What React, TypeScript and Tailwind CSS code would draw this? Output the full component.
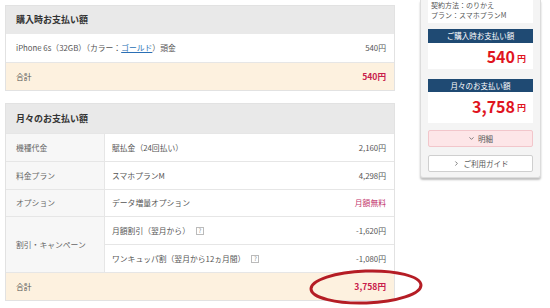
import React from "react";
import { ChevronDown, ChevronRight } from "lucide-react";

const font = { fontFamily: '"Noto Sans CJK JP", "Noto Sans", sans-serif' };

const Help = () => (
  <span className="ml-[6px] inline-flex h-[8px] w-[8px] items-center justify-center border border-[#bbb] text-[6px] leading-none text-[#888]">
    ?
  </span>
);

const Row = ({
  label,
  item,
  value,
  h = "h-[28px]",
  valueClass = "text-[#555]",
}: {
  label: string;
  item: React.ReactNode;
  value: string;
  h?: string;
  valueClass?: string;
}) => (
  <div className={`flex ${h} border-t border-[#e6e6e6]`}>
    <div className="flex w-[99px] items-center border-r border-[#e6e6e6] bg-[#f7f7f7] pl-[10px] text-[#666]">
      {label}
    </div>
    <div className="flex flex-1 items-center justify-between bg-white pl-[7px] pr-[8px]">
      <span className="flex items-center">{item}</span>
      <span className={valueClass}>{value}</span>
    </div>
  </div>
);

const SubRow = ({ item, value, first }: { item: React.ReactNode; value: string; first?: boolean }) => (
  <div
    className={`flex items-center justify-between bg-white pl-[7px] pr-[8px] ${
      first ? "h-[27px]" : "h-[28px] border-t border-[#e6e6e6]"
    }`}
  >
    <span className="flex items-center">{item}</span>
    <span>{value}</span>
  </div>
);

export default function App() {
  return (
    <div className="relative flex h-[308px] w-[550px] overflow-hidden bg-white pl-[5px] text-[7.8px] text-[#555]" style={font}>
      <div className="w-[390px]">
        {/* 購入時 */}
        <div className="mt-[5px] border border-[#e2e2e2]">
          <div className="flex h-[28px] items-center bg-[#e9e9e9] pl-[10px] text-[9px] font-bold text-[#333]">
            購入時お支払い額
          </div>
          <div className="flex h-[28px] items-center justify-between bg-white pl-[10px] pr-[8px]">
            <span>
              iPhone 6s（32GB）（カラー：<span className="text-[#2a6fb5] underline">ゴールド</span>）頭金
            </span>
            <span>540円</span>
          </div>
          <div className="flex h-[28px] items-center justify-between border-t border-[#e6e6e6] bg-[#fdf1df] pl-[10px] pr-[8px]">
            <span>合計</span>
            <span className="text-[8.6px] font-bold text-[#c8204b]">540円</span>
          </div>
        </div>

        {/* 月々 */}
        <div className="mt-[12px] border border-[#e2e2e2]">
          <div className="flex h-[29px] items-center bg-[#e9e9e9] pl-[10px] text-[9px] font-bold text-[#333]">
            月々のお支払い額
          </div>
          <Row label="機種代金" item="賦払金（24回払い）" value="2,160円" />
          <Row label="料金プラン" item="スマホプランM" value="4,298円" />
          <Row label="オプション" item="データ増量オプション" value="月額無料" h="h-[27px]" valueClass="text-[#c2346a]" />
          <div className="flex border-t border-[#e6e6e6]">
            <div className="flex w-[99px] items-center border-r border-[#e6e6e6] bg-[#f7f7f7] pl-[10px] text-[#666]">
              割引・キャンペーン
            </div>
            <div className="flex-1">
              <SubRow
                first
                item={
                  <>
                    月額割引（翌月から）
                    <Help />
                  </>
                }
                value="-1,620円"
              />
              <SubRow
                item={
                  <>
                    ワンキュッパ割（翌月から12ヵ月間）
                    <Help />
                  </>
                }
                value="-1,080円"
              />
            </div>
          </div>
          <div className="flex h-[28px] items-center justify-between border-t border-[#e6e6e6] bg-[#fdf1df] pl-[10px] pr-[8px]">
            <span>合計</span>
            <span className="text-[8.6px] font-bold text-[#c8204b]">3,758円</span>
          </div>
        </div>
      </div>

      {/* sidebar */}
      <div className="ml-[25px] h-[178px] w-[121px] rounded-b-[3px] border-x border-b border-[#dcdcdc] bg-[#f4f4f4] px-[7px] pb-[6px] shadow-[0_2px_2px_rgba(0,0,0,0.25)]">
        <div className="h-[23px] bg-white pl-[3px] text-[7px] leading-[10px] text-[#555]">
          <div>契約方法：のりかえ</div>
          <div>プラン：スマホプランM</div>
        </div>
        <div className="mt-[6px] bg-white">
          <div className="flex h-[14px] items-center justify-center bg-[#1f4a73] text-[7.5px] text-white">
            ご購入時お支払い額
          </div>
          <div className="flex h-[26px] items-center justify-end pr-[7px] text-[#e0141e]">
            <span className="text-[16px] font-bold leading-none">540</span>
            <span className="ml-[2px] mt-[4px] text-[9px] font-bold leading-none">円</span>
          </div>
        </div>
        <div className="mt-[10px] bg-white">
          <div className="flex h-[13px] items-center justify-center bg-[#1f4a73] text-[7.5px] text-white">
            月々のお支払い額
          </div>
          <div className="flex h-[31px] items-center justify-end pr-[7px] pb-[4px] text-[#e0141e]">
            <span className="text-[16px] font-bold leading-none">3,758</span>
            <span className="ml-[2px] mt-[4px] text-[9px] font-bold leading-none">円</span>
          </div>
        </div>
        <div className="mt-[7px] flex h-[17px] items-center justify-center rounded-[2px] border border-[#f2c6cb] bg-[#fde6e8] text-[7.5px] text-[#555]">
          <ChevronDown size={7} strokeWidth={2.5} className="mr-[3px]" />
          明細
        </div>
        <div className="mt-[8px] flex h-[17px] items-center justify-center rounded-[2px] border border-[#cfcfcf] bg-white text-[7.5px] text-[#555]">
          <ChevronRight size={7} strokeWidth={2.5} className="mr-[4px]" />
          ご利用ガイド
        </div>
      </div>

      {/* annotation */}
      <svg className="absolute left-[309px] top-[269px]" width="114" height="36" viewBox="0 0 114 36">
        <ellipse cx="57" cy="18" rx="55" ry="16" fill="none" stroke="#b51d25" strokeWidth="3" transform="rotate(-2 57 18)" />
      </svg>
    </div>
  );
}
